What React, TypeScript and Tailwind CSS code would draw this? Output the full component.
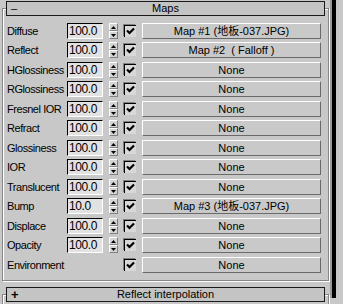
import React from "react";

type Row = { label: string; val: string | null; map: string };

const rows: Row[] = [
  { label: "Diffuse", val: "100.0", map: "Map #1 (地板-037.JPG)" },
  { label: "Reflect", val: "100.0", map: "Map #2  ( Falloff )" },
  { label: "HGlossiness", val: "100.0", map: "None" },
  { label: "RGlossiness", val: "100.0", map: "None" },
  { label: "Fresnel IOR", val: "100.0", map: "None" },
  { label: "Refract", val: "100.0", map: "None" },
  { label: "Glossiness", val: "100.0", map: "None" },
  { label: "IOR", val: "100.0", map: "None" },
  { label: "Translucent", val: "100.0", map: "None" },
  { label: "Bump", val: "10.0", map: "Map #3 (地板-037.JPG)" },
  { label: "Displace", val: "100.0", map: "None" },
  { label: "Opacity", val: "100.0", map: "None" },
  { label: "Environment", val: null, map: "None" },
];

function Spinner() {
  return (
    <div className="ml-[6px] flex h-[16px] w-[9px] flex-col">
      <div className="flex h-[8px] items-center justify-center border-t border-l border-t-white border-l-white border-b border-b-[#808080] border-r border-r-[#808080] bg-[#d4d4d4]">
        <svg width="5" height="3" viewBox="0 0 5 3">
          <polygon points="2.5,0 5,3 0,3" fill="#000" />
        </svg>
      </div>
      <div className="flex h-[8px] items-center justify-center border-t border-l border-t-white border-l-white border-b border-b-[#808080] border-r border-r-[#808080] bg-[#d4d4d4]">
        <svg width="5" height="3" viewBox="0 0 5 3">
          <polygon points="0,0 5,0 2.5,3" fill="#000" />
        </svg>
      </div>
    </div>
  );
}

function Check() {
  return (
    <div className="mt-[1px] h-[13px] w-[13px] border-t border-l border-t-[#808080] border-l-[#808080] border-b border-r border-b-white border-r-white">
      <div className="flex h-[12px] w-[12px] items-center justify-center border-t border-l border-t-black border-l-black bg-[#d8d8d8]">
        <svg width="9" height="9" viewBox="0 0 9 9">
          <polyline points="1,3.5 3.5,6 8,1.5" fill="none" stroke="#000" strokeWidth="2.2" />
        </svg>
      </div>
    </div>
  );
}

function Header({ sign, title, bold }: { sign: string; title: string; bold?: boolean }) {
  return (
    <div className="mx-[3px] -mt-[8px] grid h-[15px] grid-cols-[20px_1fr_20px] items-center border border-[#1a1a1a] bg-[#c4c4c4] leading-[13px]">
      <span className={`pl-[4px] ${bold ? "text-[13px] font-bold" : "text-[11px]"}`}>{sign}</span>
      <span className="text-center text-[11px]">{title}</span>
      <span />
    </div>
  );
}

export default function App() {
  return (
    <div
      className="flex h-[304px] w-[343px] overflow-hidden bg-[#c8c8c8] text-black"
      style={{ fontFamily: '"Liberation Sans", Arial, "Noto Sans CJK SC", sans-serif' }}
    >
      <div className="w-[330px] px-[2px]">
        <div className="mt-[8px] w-[327px] border border-[#868686] pb-[6px] shadow-[inset_1px_1px_0_#fff,1px_1px_0_#fff]">
          <Header sign="–" title="Maps" />
          <div className="mt-[5px] flex flex-col pl-[4px]">
            {rows.map((r, i) => (
              <div key={r.label} className={`flex items-start pt-[2px] ${i % 2 === 0 ? "h-[19px]" : "h-[20px]"}`}>
                <div className="w-[60px] whitespace-nowrap text-[11px] leading-[16px] tracking-[-0.45px]">{r.label}</div>
                {r.val !== null ? (
                  <>
                    <div className="h-[16px] w-[36px] border-t border-l border-t-black border-l-black border-b border-r border-b-white border-r-white bg-[#e2e2e2] pl-[1px] text-[12px] leading-[14px] tracking-[-0.4px]">
                      {r.val}
                    </div>
                    <Spinner />
                  </>
                ) : (
                  <div className="w-[51px]" />
                )}
                <div className="ml-[5px]">
                  <Check />
                </div>
                <div className="ml-[6px] flex h-[16px] w-[179px] items-center justify-center whitespace-pre border-t border-l border-t-white border-l-white border-b border-r border-b-[#6a6a6a] border-r-[#6a6a6a] bg-[#c9c9c9] text-[11px] leading-[14px]">
                  {r.map}
                </div>
              </div>
            ))}
          </div>
        </div>
        <div className="mt-[13px] h-[40px] w-[327px] border border-[#868686] shadow-[inset_1px_1px_0_#fff,1px_1px_0_#fff]">
          <Header sign="+" title="Reflect interpolation" bold />
        </div>
      </div>
      <div className="h-[298px] w-[2px] bg-[#9a9a9a]" />
      <div className="h-[298px] w-[4px] bg-black" />
      <div className="flex-1" />
    </div>
  );
}
